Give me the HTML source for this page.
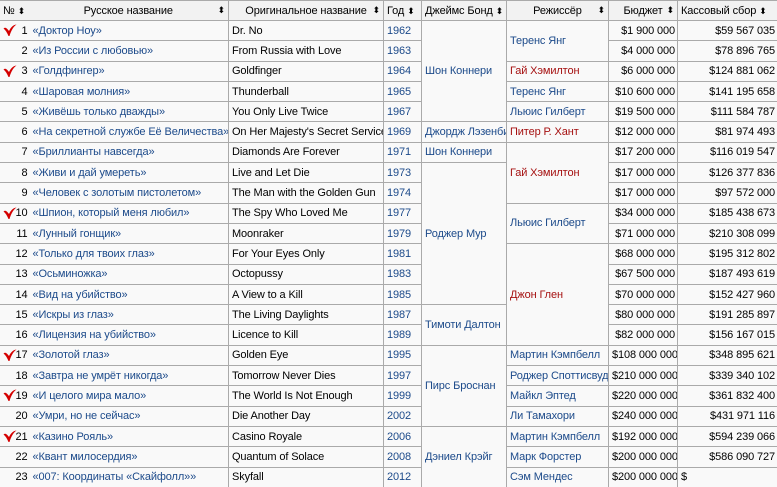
<!DOCTYPE html>
<html><head><meta charset="utf-8"><style>
html,body{margin:0;padding:0;background:#fff;width:777px;height:487px;overflow:hidden}
table{border-collapse:collapse;table-layout:fixed;width:778px;font-family:"Liberation Sans","DejaVu Sans",sans-serif;font-size:11px;letter-spacing:-0.12px;color:#000;background:#f9f9f9;margin-left:-1px}
td,th{border:1px solid #aaa;padding:0 3px;white-space:nowrap;overflow:hidden;height:19.3px;line-height:12px;font-weight:normal}
th{background:#f2f2f2;height:19px;position:relative;text-align:center}
th .s{position:absolute;right:3px;top:3px;font-size:9px;letter-spacing:0}
th.l{text-align:left}
.n{text-align:right;border-right:none;padding-right:1px;position:relative}
.t{border-left:none;padding-left:4px}
a{color:#1c4a8a;text-decoration:none}
a.r{color:#a51010}
.r1{text-align:right;padding-right:2px}
.c{position:absolute;left:3px;top:3px}
</style></head><body>
<table>
<colgroup><col style="width:29px"><col style="width:200px"><col style="width:155px"><col style="width:38px"><col style="width:85px"><col style="width:102px"><col style="width:69px"><col style="width:100px"></colgroup>
<tr><th class="l" style="border-right:none">№ <span style="font-size:9px">⬍</span></th><th style="border-left:none">Русское название<span class="s">⬍</span></th><th>Оригинальное название <span class="s">⬍</span></th><th class="l">Год <span style="font-size:9px">⬍</span></th><th class="l">Джеймс Бонд <span style="font-size:9px">⬍</span></th><th>Режиссёр<span class="s">⬍</span></th><th>Бюджет <span class="s">⬍</span></th><th class="l">Кассовый сбор <span style="font-size:9px">⬍</span></th></tr>
<tr><td class="n"><svg class="c" width="14" height="13" viewBox="0 0 14 13"><path d="M0.5 4.5 C2 3 3.5 3.5 6 7 C8 3 10 1 13.5 0.5 C10 3 8 7 6.5 12 L5.5 12 C4 8.5 2.5 6 0.5 4.5 Z" fill="#d40000"/></svg>1</td><td class="t"><a>«Доктор Ноу»</a></td><td>Dr. No</td><td><a>1962</a></td><td rowspan="5"><a>Шон Коннери</a></td><td rowspan="2"><a>Теренс Янг</a></td><td class="r1">$1 900 000</td><td class="r1">$59 567 035</td></tr>
<tr><td class="n">2</td><td class="t"><a>«Из России с любовью»</a></td><td>From Russia with Love</td><td><a>1963</a></td><td class="r1">$4 000 000</td><td class="r1">$78 896 765</td></tr>
<tr><td class="n"><svg class="c" width="14" height="13" viewBox="0 0 14 13"><path d="M0.5 4.5 C2 3 3.5 3.5 6 7 C8 3 10 1 13.5 0.5 C10 3 8 7 6.5 12 L5.5 12 C4 8.5 2.5 6 0.5 4.5 Z" fill="#d40000"/></svg>3</td><td class="t"><a>«Голдфингер»</a></td><td>Goldfinger</td><td><a>1964</a></td><td><a class="r">Гай Хэмилтон</a></td><td class="r1">$6 000 000</td><td class="r1">$124 881 062</td></tr>
<tr><td class="n">4</td><td class="t"><a>«Шаровая молния»</a></td><td>Thunderball</td><td><a>1965</a></td><td><a>Теренс Янг</a></td><td class="r1">$10 600 000</td><td class="r1">$141 195 658</td></tr>
<tr><td class="n">5</td><td class="t"><a>«Живёшь только дважды»</a></td><td>You Only Live Twice</td><td><a>1967</a></td><td><a>Льюис Гилберт</a></td><td class="r1">$19 500 000</td><td class="r1">$111 584 787</td></tr>
<tr><td class="n">6</td><td class="t"><a>«На секретной службе Её Величества»</a></td><td>On Her Majesty's Secret Service</td><td><a>1969</a></td><td><a>Джордж Лэзенби</a></td><td><a class="r">Питер Р. Хант</a></td><td class="r1">$12 000 000</td><td class="r1">$81 974 493</td></tr>
<tr><td class="n">7</td><td class="t"><a>«Бриллианты навсегда»</a></td><td>Diamonds Are Forever</td><td><a>1971</a></td><td><a>Шон Коннери</a></td><td rowspan="3"><a class="r">Гай Хэмилтон</a></td><td class="r1">$17 200 000</td><td class="r1">$116 019 547</td></tr>
<tr><td class="n">8</td><td class="t"><a>«Живи и дай умереть»</a></td><td>Live and Let Die</td><td><a>1973</a></td><td rowspan="7"><a>Роджер Мур</a></td><td class="r1">$17 000 000</td><td class="r1">$126 377 836</td></tr>
<tr><td class="n">9</td><td class="t"><a>«Человек с золотым пистолетом»</a></td><td>The Man with the Golden Gun</td><td><a>1974</a></td><td class="r1">$17 000 000</td><td class="r1">$97 572 000</td></tr>
<tr><td class="n"><svg class="c" width="14" height="13" viewBox="0 0 14 13"><path d="M0.5 4.5 C2 3 3.5 3.5 6 7 C8 3 10 1 13.5 0.5 C10 3 8 7 6.5 12 L5.5 12 C4 8.5 2.5 6 0.5 4.5 Z" fill="#d40000"/></svg>10</td><td class="t"><a>«Шпион, который меня любил»</a></td><td>The Spy Who Loved Me</td><td><a>1977</a></td><td rowspan="2"><a>Льюис Гилберт</a></td><td class="r1">$34 000 000</td><td class="r1">$185 438 673</td></tr>
<tr><td class="n">11</td><td class="t"><a>«Лунный гонщик»</a></td><td>Moonraker</td><td><a>1979</a></td><td class="r1">$71 000 000</td><td class="r1">$210 308 099</td></tr>
<tr><td class="n">12</td><td class="t"><a>«Только для твоих глаз»</a></td><td>For Your Eyes Only</td><td><a>1981</a></td><td rowspan="5"><a class="r">Джон Глен</a></td><td class="r1">$68 000 000</td><td class="r1">$195 312 802</td></tr>
<tr><td class="n">13</td><td class="t"><a>«Осьминожка»</a></td><td>Octopussy</td><td><a>1983</a></td><td class="r1">$67 500 000</td><td class="r1">$187 493 619</td></tr>
<tr><td class="n">14</td><td class="t"><a>«Вид на убийство»</a></td><td>A View to a Kill</td><td><a>1985</a></td><td class="r1">$70 000 000</td><td class="r1">$152 427 960</td></tr>
<tr><td class="n">15</td><td class="t"><a>«Искры из глаз»</a></td><td>The Living Daylights</td><td><a>1987</a></td><td rowspan="2"><a>Тимоти Далтон</a></td><td class="r1">$80 000 000</td><td class="r1">$191 285 897</td></tr>
<tr><td class="n">16</td><td class="t"><a>«Лицензия на убийство»</a></td><td>Licence to Kill</td><td><a>1989</a></td><td class="r1">$82 000 000</td><td class="r1">$156 167 015</td></tr>
<tr><td class="n"><svg class="c" width="14" height="13" viewBox="0 0 14 13"><path d="M0.5 4.5 C2 3 3.5 3.5 6 7 C8 3 10 1 13.5 0.5 C10 3 8 7 6.5 12 L5.5 12 C4 8.5 2.5 6 0.5 4.5 Z" fill="#d40000"/></svg>17</td><td class="t"><a>«Золотой глаз»</a></td><td>Golden Eye</td><td><a>1995</a></td><td rowspan="4"><a>Пирс Броснан</a></td><td><a>Мартин Кэмпбелл</a></td><td class="r1">$108 000 000</td><td class="r1">$348 895 621</td></tr>
<tr><td class="n">18</td><td class="t"><a>«Завтра не умрёт никогда»</a></td><td>Tomorrow Never Dies</td><td><a>1997</a></td><td><a>Роджер Споттисвуд</a></td><td class="r1">$210 000 000</td><td class="r1">$339 340 102</td></tr>
<tr><td class="n"><svg class="c" width="14" height="13" viewBox="0 0 14 13"><path d="M0.5 4.5 C2 3 3.5 3.5 6 7 C8 3 10 1 13.5 0.5 C10 3 8 7 6.5 12 L5.5 12 C4 8.5 2.5 6 0.5 4.5 Z" fill="#d40000"/></svg>19</td><td class="t"><a>«И целого мира мало»</a></td><td>The World Is Not Enough</td><td><a>1999</a></td><td><a>Майкл Эптед</a></td><td class="r1">$220 000 000</td><td class="r1">$361 832 400</td></tr>
<tr><td class="n">20</td><td class="t"><a>«Умри, но не сейчас»</a></td><td>Die Another Day</td><td><a>2002</a></td><td><a>Ли Тамахори</a></td><td class="r1">$240 000 000</td><td class="r1">$431 971 116</td></tr>
<tr><td class="n"><svg class="c" width="14" height="13" viewBox="0 0 14 13"><path d="M0.5 4.5 C2 3 3.5 3.5 6 7 C8 3 10 1 13.5 0.5 C10 3 8 7 6.5 12 L5.5 12 C4 8.5 2.5 6 0.5 4.5 Z" fill="#d40000"/></svg>21</td><td class="t"><a>«Казино Рояль»</a></td><td>Casino Royale</td><td><a>2006</a></td><td rowspan="3"><a>Дэниел Крэйг</a></td><td><a>Мартин Кэмпбелл</a></td><td class="r1">$192 000 000</td><td class="r1">$594 239 066</td></tr>
<tr><td class="n">22</td><td class="t"><a>«Квант милосердия»</a></td><td>Quantum of Solace</td><td><a>2008</a></td><td><a>Марк Форстер</a></td><td class="r1">$200 000 000</td><td class="r1">$586 090 727</td></tr>
<tr><td class="n">23</td><td class="t"><a>«007: Координаты «Скайфолл»»</a></td><td>Skyfall</td><td><a>2012</a></td><td><a>Сэм Мендес</a></td><td class="r1">$200 000 000</td><td>$</td></tr>
</table>
</body></html>
